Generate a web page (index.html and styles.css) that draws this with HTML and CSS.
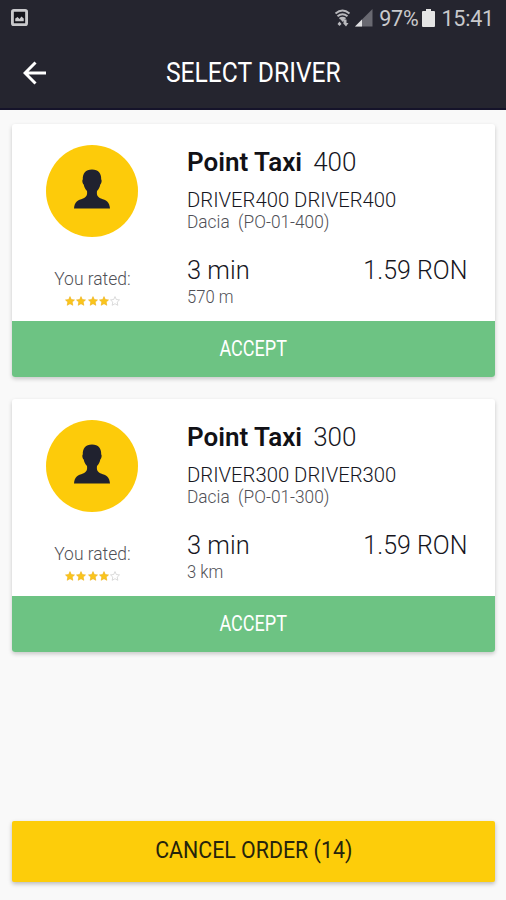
FILE: index.html
```html
<!DOCTYPE html>
<html lang="en">
<head>
<meta charset="utf-8">
<title>Select driver</title>
<link rel="stylesheet" href="styles.css">
</head>
<body>
<svg class="defs" aria-hidden="true">
  <symbol id="person" viewBox="0 0 36 40">
    <path d="M18 0.5C11.500 0.500 8.500 4.500 8.800 10.500C8 11 8.300 14.500 9.700 15.500C10.200 18.500 11.500 20.500 13 22C13.500 26 12.500 28 9 29.500C4 31.300 0.500 32.500 0 39.500H36C35.500 32.500 32 31.300 27 29.500C23.500 28 22.500 26 23 22C24.500 20.500 25.800 18.500 26.300 15.500C27.700 14.500 28 11 27.200 10.500C27.500 4.500 24.500 0.500 18 0.500Z"/>
  </symbol>
  <symbol id="star" viewBox="0 0 10 10">
    <path d="M5 .6 6.300 3.500 9.500 3.900 7.200 6.100 7.800 9.300 5 7.700 2.200 9.300 2.800 6.100 .5 3.900 3.700 3.500Z"/>
  </symbol>
</svg>
<header class="header">
  <div class="status">
    <svg class="picture" viewBox="0 0 18 18"><rect x="1.500" y="1.500" width="15" height="15" rx="1.500"/><path d="M4.500 13V10L7 8.500 9 10.500 11 8 13.500 10V13Z"/></svg>
    <div class="indicators">
      <svg class="wifi" viewBox="0 0 18 18"><path class="arc" d="M1.500 4.500Q8.500-1.500 15.500 4.500M3.500 7.300Q8.500 3 13.500 7.300M5.500 9.800Q8.500 7.500 11.500 9.800"/><path d="M6 9.500Q8.500 8 11 9.500L8.500 13ZM5.500 12.500 7.500 15 5.500 17 3.500 15ZM9.500 10.500H12.500V14H14.500L12 17.500 9 14H9.500Z"/></svg>
      <svg class="signal" viewBox="0 0 18 18"><path class="dim" d="M17.500 0V17.500H0Z"/><path d="M7 10.500V17.500H0Z"/></svg>
      <span class="percent">97%</span>
      <svg class="battery" viewBox="0 0 13 18"><path d="M4 0H9V2H12Q13 2 13 3V17Q13 18 12 18H1Q0 18 0 17V3Q0 2 1 2H4Z"/></svg>
      <span class="clock">15:41</span>
    </div>
  </div>
  <div class="toolbar">
    <svg class="back" viewBox="0 0 24 24"><path d="M23 12H2M12.500 1.500 2 12 12.500 22.500"/></svg>
    <h1 class="title"><span>SELECT DRIVER</span></h1>
  </div>
</header>
<main class="content">
  <article class="card">
    <div class="card-body">
      <div class="profile">
        <div class="avatar"><svg><use href="#person"/></svg></div>
        <div class="rated"><span>You rated:</span></div>
        <div class="stars"><svg><use href="#star"/></svg><svg><use href="#star"/></svg><svg><use href="#star"/></svg><svg><use href="#star"/></svg><svg class="empty"><use href="#star"/></svg></div>
      </div>
      <div class="details">
        <div class="company"><strong>Point Taxi</strong><span class="number">400</span></div>
        <div class="driver"><span>DRIVER400 DRIVER400</span></div>
        <div class="car"><span>Dacia &nbsp;(PO-01-400)</span></div>
        <div class="trip"><span class="time">3 min</span><span class="price">1.59 RON</span></div>
        <div class="distance"><span>570 m</span></div>
      </div>
    </div>
    <button class="accept"><span>ACCEPT</span></button>
  </article>
  <article class="card">
    <div class="card-body">
      <div class="profile">
        <div class="avatar"><svg><use href="#person"/></svg></div>
        <div class="rated"><span>You rated:</span></div>
        <div class="stars"><svg><use href="#star"/></svg><svg><use href="#star"/></svg><svg><use href="#star"/></svg><svg><use href="#star"/></svg><svg class="empty"><use href="#star"/></svg></div>
      </div>
      <div class="details">
        <div class="company"><strong>Point Taxi</strong><span class="number">300</span></div>
        <div class="driver"><span>DRIVER300 DRIVER300</span></div>
        <div class="car"><span>Dacia &nbsp;(PO-01-300)</span></div>
        <div class="trip"><span class="time">3 min</span><span class="price">1.59 RON</span></div>
        <div class="distance"><span>3 km</span></div>
      </div>
    </div>
    <button class="accept"><span>ACCEPT</span></button>
  </article>
  <button class="cancel"><span>CANCEL ORDER (14)</span></button>
</main>
</body>
</html>
```
FILE: styles.css
```css
* { box-sizing: border-box; }
body {
  margin: 0;
  height: 900px;
  display: flex;
  flex-direction: column;
  background: #f9f9f9;
  color: #16161e;
  font-family: Roboto, "Liberation Sans", sans-serif;
}
.defs { display: none; }
svg { display: block; flex: none; }
button { border: 0; padding: 0; font-family: inherit; }
.header {
  height: 110px;
  background: #25252f;
  border-bottom: 2px solid #15132a;
  color: #fff;
}
.status {
  height: 36px;
  display: flex;
  justify-content: space-between;
  align-items: center;
  padding: 0 12px 0 11px;
  color: #c9c9cc;
  font-size: 21.5px;
}
.picture { width: 17px; height: 17px; margin-top: -1px; fill: #c9c9cc; }
.picture rect { fill: #15151c; stroke: #c9c9cc; stroke-width: 3; }
.indicators { display: flex; align-items: center; }
.wifi { width: 18px; height: 18px; margin-top: -1px; fill: #b9b9bd; }
.wifi .arc { fill: none; stroke: #b9b9bd; stroke-width: 1.900; }
.signal { width: 18px; height: 18px; margin-left: 3px; fill: #e0e0e2; }
.signal .dim { fill: #696971; }
.percent { margin-left: 6px; letter-spacing: -.2px; }
.battery { width: 13px; height: 18px; margin-left: 4px; fill: #e4e4e4; }
.clock { margin-left: 6px; letter-spacing: -.2px; }
.toolbar {
  height: 72px;
  display: grid;
  grid-template-columns: 72px 1fr 72px;
  align-items: center;
}
.back { width: 24px; height: 24px; margin: 2px 0 0 23px; fill: none; stroke: #fff; stroke-width: 3; }
.title { margin: 2px 0 0; text-align: center; font-size: 28px; line-height: 32px; font-weight: 400; }
.title span, .rated span, .driver span, .car span, .time, .price, .distance span, .accept span, .cancel span { display: inline-block; }
.title span { transform: scaleX(.88); }
.content {
  flex: 1;
  display: flex;
  flex-direction: column;
  gap: 22px;
  padding: 14px 11px 18px 12px;
}
.card {
  height: 253px;
  background: #fff;
  border-radius: 3px;
  overflow: hidden;
  box-shadow: 0 2px 4px rgba(0, 0, 0, .2);
}
.card-body { height: 197px; display: grid; grid-template-columns: 175px 1fr; }
.profile { display: flex; flex-direction: column; align-items: center; padding: 21px 15px 0 0; }
.avatar {
  width: 92px;
  height: 92px;
  border-radius: 50%;
  background: #fdcb0a;
  display: flex;
  align-items: center;
  justify-content: center;
}
.avatar svg { width: 36px; height: 40px; margin-top: -5px; fill: #20222f; }
.rated { margin-top: 31px; height: 22px; line-height: 22px; font-size: 18px; font-weight: 300; color: #505056; }
.rated span { transform: scaleX(.97); }
.stars { display: flex; gap: 1.300px; margin: 6px 0 0 1px; }
.stars svg { width: 10px; height: 10px; fill: #fac51c; stroke: #edb01b; stroke-width: .6; }
.stars .empty { fill: #fff; stroke: #ccc; stroke-width: .7; }
.details { padding: 22px 28px 0 0; font-weight: 300; }
.details > div { white-space: nowrap; }
.company { height: 32px; line-height: 32px; font-size: 26px; display: flex; gap: 11px; }
.company strong { font-weight: 600; color: #111116; }
.driver { height: 26px; margin-top: 9px; line-height: 27px; font-size: 21px; }
.driver span { transform: scaleX(.965); transform-origin: left; }
.car { height: 22px; line-height: 18px; font-size: 18px; color: #505056; }
.car span { transform: scaleX(.96); transform-origin: left; }
.trip { height: 32px; margin-top: 19px; line-height: 32px; font-size: 26px; display: flex; justify-content: space-between; }
.time { transform: scaleX(.98); transform-origin: left; }
.price { transform: scaleX(.96); transform-origin: right; }
.distance { height: 20px; line-height: 22px; font-size: 17.5px; color: #505056; }
.distance span { transform: scaleX(.95); transform-origin: left; }
.accept { display: block; width: 100%; height: 56px; padding-bottom: 2px; background: #6dc383; color: #fff; font-size: 22px; font-weight: 400; }
.accept span { transform: scaleX(.82); }
.cancel {
  height: 61px;
  margin-top: auto;
  padding-bottom: 3px;
  background: #fdcd0a;
  color: #26240c;
  border-radius: 2px;
  box-shadow: 0 2px 4px rgba(0, 0, 0, .25);
  font-size: 24px;
}
.cancel span { transform: scaleX(.89); }
```
